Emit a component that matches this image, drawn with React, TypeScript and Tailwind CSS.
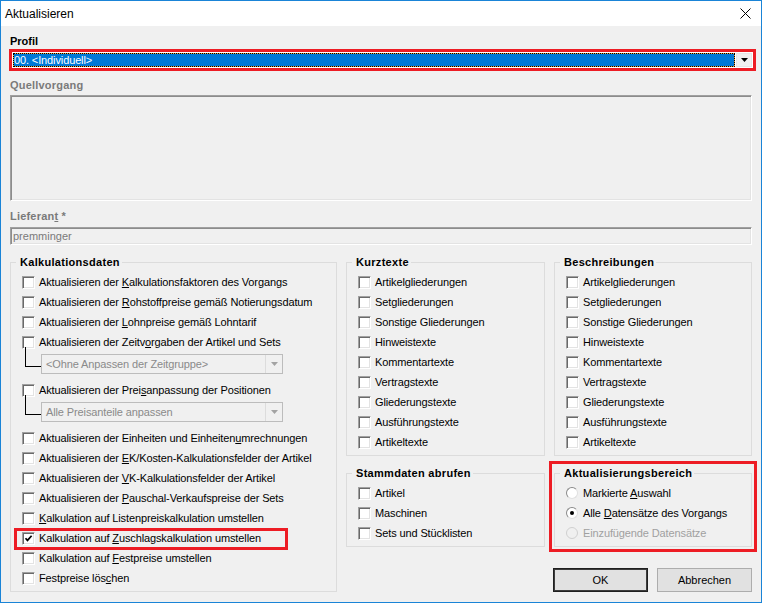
import type { ReactNode } from "react";

function Mn({ text }: { text: string }) {
  const i = text.indexOf("&");
  if (i < 0) return <>{text}</>;
  return (
    <>
      {text.slice(0, i)}
      <u className="underline-offset-[1px]">{text[i + 1]}</u>
      {text.slice(i + 2)}
    </>
  );
}

function Tri({ color }: { color: string }) {
  return (
    <svg width="7" height="4" viewBox="0 0 7 4">
      <polygon points="0,0 7,0 3.5,4" fill={color} />
    </svg>
  );
}

function Box({ checked }: { checked?: boolean }) {
  return (
    <span className="w-[13px] h-[13px] shrink-0 bg-white border border-t-[#a0a0a0] border-l-[#a0a0a0] border-r-white border-b-white shadow-[inset_1px_1px_0_#696969,inset_-1px_-1px_0_#e3e3e3] flex items-center justify-center">
      {checked && (
        <svg width="9" height="9" viewBox="0 0 9 9">
          <path d="M1.5 4.2 L3.5 6.4 L7.6 1.8" fill="none" stroke="#000" strokeWidth="1.7" />
        </svg>
      )}
    </span>
  );
}

function Check({ label, checked }: { label: string; checked?: boolean }) {
  return (
    <div className="h-[20px] flex items-center gap-[4px]">
      <Box checked={checked} />
      <span className="whitespace-nowrap tracking-[-0.12px]">
        <Mn text={label} />
      </span>
    </div>
  );
}

function Radio({ label, checked, disabled }: { label: string; checked?: boolean; disabled?: boolean }) {
  return (
    <div className="h-[20px] flex items-center gap-[5px]">
      <span
        className={`w-[12px] h-[12px] shrink-0 rounded-full border ${
          disabled ? "border-[#d0d0d0] bg-[#f0f0f0]" : "border-t-[#8a8a8a] border-l-[#8a8a8a] border-r-[#e0e0e0] border-b-[#e0e0e0] bg-white"
        } flex items-center justify-center`}
      >
        {checked && <span className="w-[4px] h-[4px] rounded-full bg-black" />}
      </span>
      <span className={`whitespace-nowrap tracking-[-0.12px] ${disabled ? "text-[#a0a0a0]" : ""}`}>
        <Mn text={label} />
      </span>
    </div>
  );
}

function Group({ title, className = "", children }: { title: string; className?: string; children: ReactNode }) {
  return (
    <fieldset className={`border border-[#dcdcdc] px-[5px] pb-[3px] ${className}`}>
      <legend className="pl-[4px] pr-[2px] font-bold leading-[14px] tracking-[0.3px]">{title}</legend>
      <div className="pl-[6px] pt-[3px]">{children}</div>
    </fieldset>
  );
}

function SubCombo({ text }: { text: string }) {
  return (
    <div className="h-[28px] flex items-start">
      <span className="ml-[3px] -mt-[5px] w-[16px] h-[20px] border-l border-b border-black shrink-0" />
      <div className="mt-[2px] w-[242px] h-[20px] border border-[#bcbcbc] bg-[#f0f0f0] flex items-center justify-between">
        <span className="pl-[4px] text-[#8a8a8a] whitespace-nowrap tracking-[-0.12px]">{text}</span>
        <span className="w-[17px] h-[18px] border-l border-[#dcdcdc] flex items-center justify-center">
          <Tri color="#a3a3a3" />
        </span>
      </div>
    </div>
  );
}

const texts = [
  "Artikelgliederungen",
  "Setgliederungen",
  "Sonstige Gliederungen",
  "Hinweistexte",
  "Kommentartexte",
  "Vertragstexte",
  "Gliederungstexte",
  "Ausführungstexte",
  "Artikeltexte",
];

export default function App() {
  return (
    <div className="w-[762px] h-[603px] border border-[#1a84d7] bg-[#f0f0f0] flex flex-col overflow-hidden font-['Liberation_Sans',Arial,sans-serif] text-[11px] leading-[14px] text-black">
      {/* title bar */}
      <div className="h-[25px] bg-white flex items-center justify-between pl-[4px] pr-[10px] shrink-0">
        <span className="text-[12px]">Aktualisieren</span>
        <svg width="11" height="11" viewBox="0 0 11 11">
          <path d="M0.5 0.5 L10.5 10.5 M10.5 0.5 L0.5 10.5" stroke="#000" strokeWidth="1" />
        </svg>
      </div>

      <div className="flex-1 px-[9px] flex flex-col">
        <div className="mt-[8px] font-bold">Profil</div>
        <div className="mt-[1px] -ml-[1px] -mr-[4px] h-[22px] border-[3px] border-[#ed1c24]">
          <div className="h-full bg-white p-[1px] flex gap-[1px]">
            <div className="flex-1 bg-[#e8a040]">
              <div className="h-full border border-dotted border-black bg-[#0078d7] bg-clip-padding text-white flex items-center tracking-[-0.12px]">
                00. &lt;Individuell&gt;
              </div>
            </div>
            <div className="w-[16px] bg-[#f0f0f0] border border-[#e6e6e6] flex items-center justify-center">
              <Tri color="#000" />
            </div>
          </div>
        </div>

        <div className="mt-[7px] font-bold text-[#7a7a7a] tracking-[0.2px]">Quellvorgang</div>
        <div className="mt-[3px] h-[106px] border border-t-[#a0a0a0] border-l-[#a0a0a0] border-r-white border-b-white shadow-[inset_1px_1px_0_#8c8c8c,inset_-1px_-1px_0_#e3e3e3]" />

        <div className="mt-[8px] font-bold text-[#7a7a7a] tracking-[0.2px]">
          Lieferan<u className="underline-offset-[1px]">t</u> *
        </div>
        <div className="mt-[4px] h-[18px] border border-t-[#a0a0a0] border-l-[#a0a0a0] border-r-white border-b-white shadow-[inset_1px_1px_0_#8c8c8c,inset_-1px_-1px_0_#e3e3e3] flex items-center pl-[2px] text-[#7a7a7a]">
          premminger
        </div>

        <div className="mt-[10px] flex gap-[9px] items-start">
          <Group title="Kalkulationsdaten" className="w-[327px] shrink-0">
            <Check label="Aktualisieren der &Kalkulationsfaktoren des Vorgangs" />
            <Check label="Aktualisieren der &Rohstoffpreise gemäß Notierungsdatum" />
            <Check label="Aktualisieren der &Lohnpreise gemäß Lohntarif" />
            <Check label="Aktualisieren der Zeitv&orgaben der Artikel und Sets" />
            <SubCombo text="<Ohne Anpassen der Zeitgruppe>" />
            <Check label="Aktualisieren der Prei&sanpassung der Positionen" />
            <SubCombo text="Alle Preisanteile anpassen" />
            <Check label="Aktualisieren der Einheiten und Einheiten&umrechnungen" />
            <Check label="Aktualisieren der &EK/Kosten-Kalkulationsfelder der Artikel" />
            <Check label="Aktualisieren der &VK-Kalkulationsfelder der Artikel" />
            <Check label="Aktualisieren der &Pauschal-Verkaufspreise der Sets" />
            <Check label="&Kalkulation auf Listenpreiskalkulation umstellen" />
            <div className="relative">
              <Check label="Kalkulation auf &Zuschlagskalkulation umstellen" checked />
              <span className="absolute -left-[8px] top-0 w-[274px] h-[22px] border-[3px] border-[#ed1c24] pointer-events-none" />
            </div>
            <Check label="Kalkulation auf &Festpreise umstellen" />
            <Check label="Festpreise lös&chen" />
          </Group>

          <div className="w-[199px] shrink-0 flex flex-col">
            <Group title="Kurztexte">
              {texts.map((t) => (
                <Check key={t} label={t} />
              ))}
            </Group>
            <Group title="Stammdaten abrufen" className="mt-[10px]">
              <Check label="Artikel" />
              <Check label="Maschinen" />
              <Check label="Sets und Stücklisten" />
            </Group>
          </div>

          <div className="w-[198px] shrink-0 flex flex-col">
            <Group title="Beschreibungen">
              {texts.map((t) => (
                <Check key={t} label={t} />
              ))}
            </Group>
            <div className="mt-[5px] -ml-[5px] -mr-[5px] border-[3px] border-[#ed1c24] p-[2px]">
              <Group title="Aktualisierungsbereich">
                <Radio label="Markierte &Auswahl" />
                <Radio label="Alle &Datensätze des Vorgangs" checked />
                <Radio label="Einzufügende Datensätze" disabled />
              </Group>
            </div>
            <div className="mt-[16px] -ml-[1px] flex justify-between">
              <button className="w-[95px] h-[24px] border border-[#1f1f1f] bg-[#e1e1e1] shadow-[inset_0_0_0_1px_#3c3c3c]">OK</button>
              <button className="w-[95px] h-[24px] border border-[#adadad] bg-[#e1e1e1]">Abbrechen</button>
            </div>
          </div>
        </div>
      </div>
    </div>
  );
}
